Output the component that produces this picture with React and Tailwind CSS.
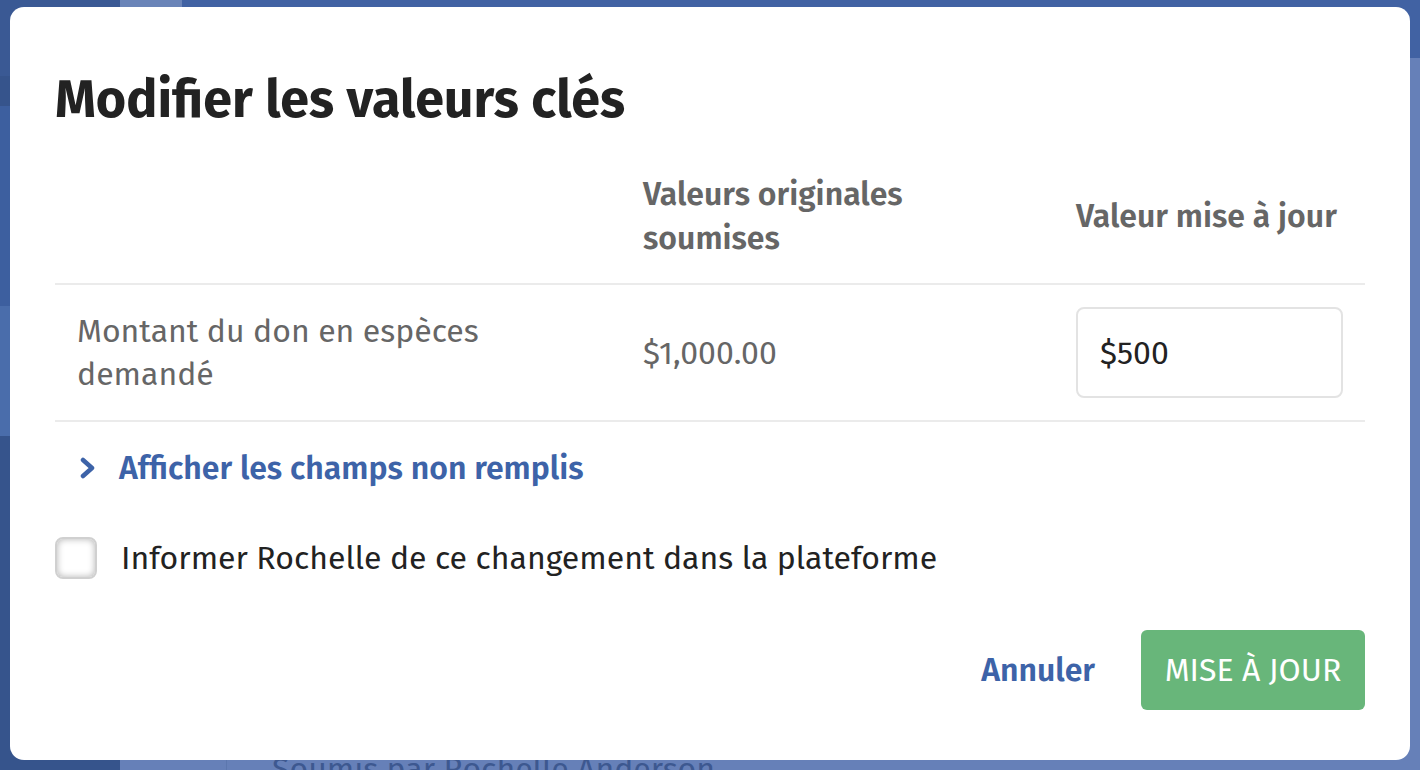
import React from "react";

export default function App() {
  const font = { fontFamily: '"Fira Sans", "Open Sans", "Noto Sans", sans-serif' };
  return (
    <div className="relative w-[1420px] h-[770px] overflow-hidden flex" style={font}>
      {/* background page */}
      <div className="w-[120px] h-full bg-[#36548c] flex flex-col">
        <div className="h-[76px] bg-[#3a5994]"></div>
        <div className="h-[30px] bg-[#36548c]"></div>
        <div className="h-[200px] bg-[#3d5f9f]"></div>
        <div className="h-[130px] bg-[#4a6dab]"></div>
        <div className="flex-1 bg-[#36548c]"></div>
      </div>
      <div className="flex-1 flex flex-col">
        <div className="h-[58px] bg-[#4162a3] flex">
          <div className="w-[62px] bg-[#6a84b8]"></div>
        </div>
        <div className="flex-1 bg-[#6680b8] flex">
          <div className="w-[107px] border-r border-[#5c77ae]"></div>
          <div className="flex-1 flex flex-col justify-end pl-[45px]">
            <div className="text-[32px] leading-[32px] text-[#3d5890] translate-y-[15px]">Soumis par Rochelle Anderson</div>
          </div>
        </div>
      </div>

      {/* modal overlay */}
      <div className="absolute left-[10px] top-[7px] w-[1400px] h-[753px] bg-white rounded-[14px] px-[45px] pt-[62px] flex flex-col">
        <h1 className="text-[52px] leading-[62px] font-bold text-[#222]">Modifier les valeurs clés</h1>

        <div className="mt-[18px] flex items-center h-[136px] border-b-2 border-[#ebebeb]">
          <div className="w-[566px]"></div>
          <div className="w-[433px] px-[22px] text-[32px] leading-[44px] font-semibold text-[#666]">
            Valeurs originales<br />soumises
          </div>
          <div className="flex-1 px-[22px] text-[32px] leading-[44px] font-semibold text-[#666]">Valeur mise à jour</div>
        </div>

        <div className="flex items-center h-[137px] border-b-2 border-[#ebebeb]">
          <div className="w-[566px] px-[22px] text-[32px] leading-[43px] text-[#666]">
            Montant du don en espèces<br />demandé
          </div>
          <div className="w-[433px] px-[22px] text-[32px] text-[#666]">$1,000.00</div>
          <div className="flex-1 px-[22px]">
            <div className="h-[91px] border-2 border-[#e3e3e3] rounded-[8px] flex items-center px-[22px] text-[32px] text-[#222]">
              $500
            </div>
          </div>
        </div>

        <div className="mt-[25px] flex items-center h-[42px] pl-[24px] gap-[22px]">
          <svg width="18" height="22" viewBox="0 0 18 22">
            <polyline points="4,3 13,11 4,19" fill="none" stroke="#3d63a8" strokeWidth="4.5" strokeLinecap="round" strokeLinejoin="round" />
          </svg>
          <span className="text-[32px] font-semibold text-[#3d63a8]">Afficher les champs non remplis</span>
        </div>

        <div className="mt-[48px] flex items-center h-[42px] gap-[24px]">
          <div className="w-[42px] h-[42px] rounded-[8px] border-2 border-[#d0d0d0] shadow-[inset_0_0_7px_rgba(0,0,0,0.3)] bg-white"></div>
          <span className="text-[32px] text-[#222]">Informer Rochelle de ce changement dans la plateforme</span>
        </div>

        <div className="mt-[51px] flex items-center justify-end gap-[46px]">
          <span className="text-[32px] font-semibold text-[#3d63a8]">Annuler</span>
          <div className="w-[224px] h-[80px] rounded-[6px] bg-[#68b67a] flex items-center justify-center text-[32px] text-white">
            MISE À JOUR
          </div>
        </div>
      </div>
    </div>
  );
}
